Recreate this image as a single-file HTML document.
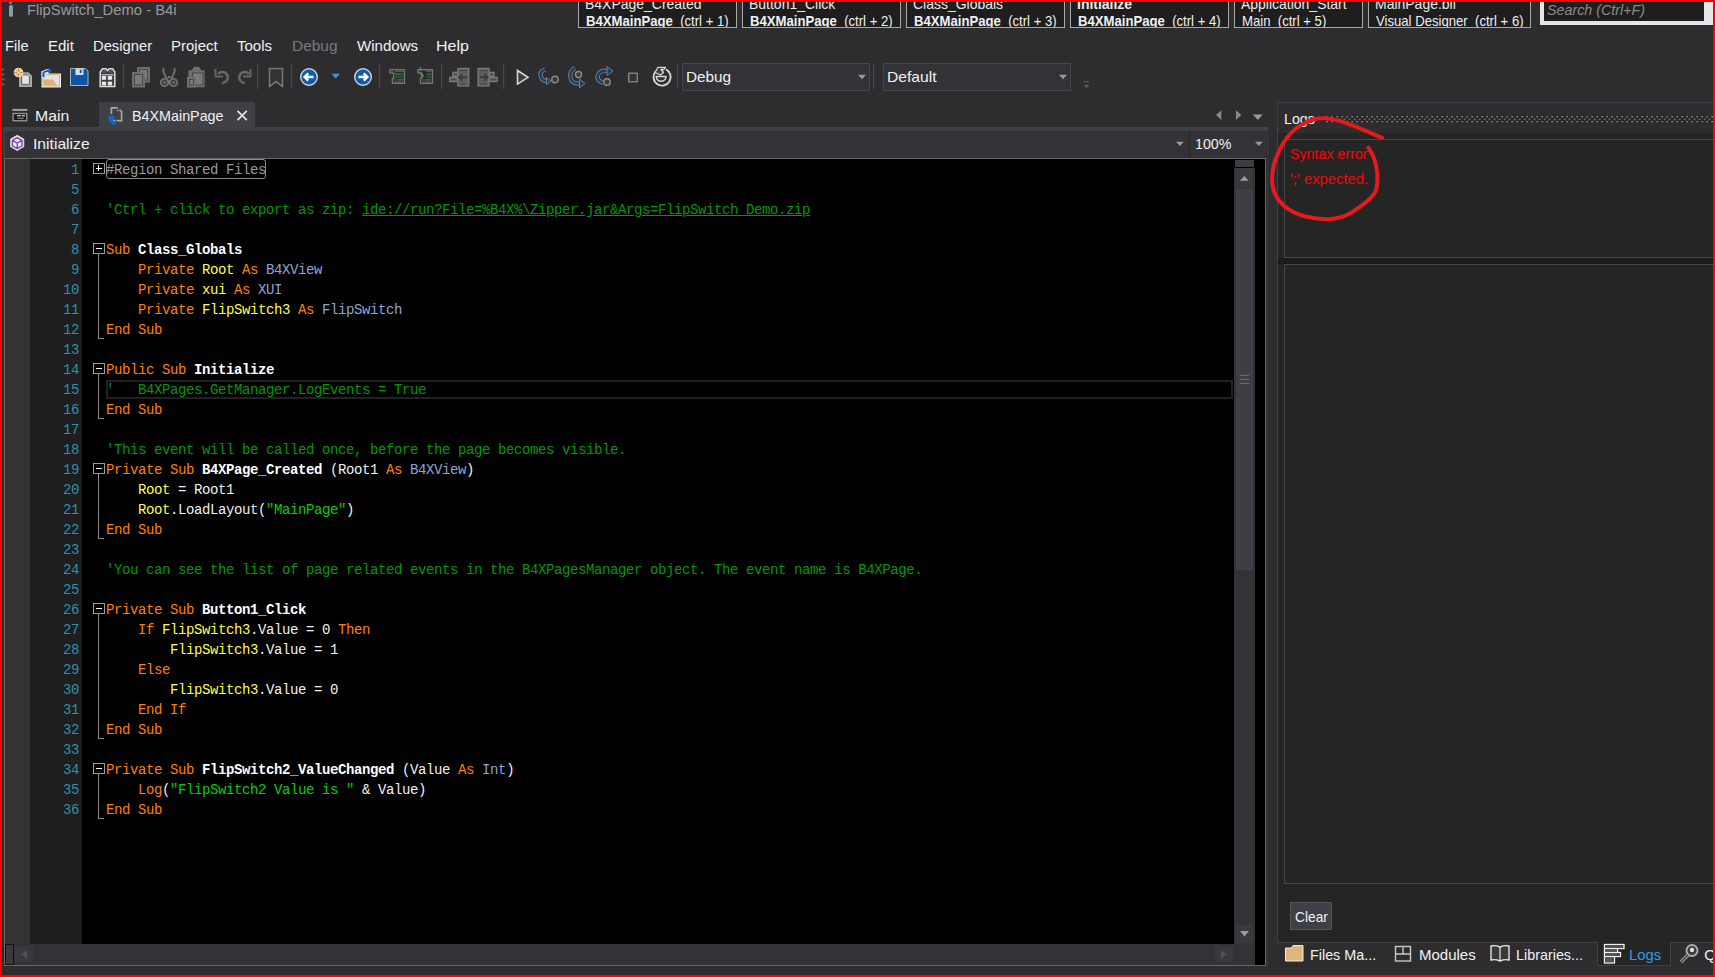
<!DOCTYPE html>
<html><head><meta charset="utf-8">
<style>
*{margin:0;padding:0;box-sizing:border-box}
html,body{width:1715px;height:977px;overflow:hidden;background:#2d2d30}
body{position:relative;font-family:"Liberation Sans",sans-serif;color:#f1f1f1}
.a{position:absolute}
.t{position:absolute;white-space:pre;line-height:1}
#frame{position:absolute;left:0;top:0;width:1715px;height:977px;border:2px solid #ff0000;z-index:50;pointer-events:none}
.nav{position:absolute;top:-2px;height:30px;background:#1e1e1e;border:1px solid #a8a8a8;border-top:none;overflow:hidden}
.nav .l1{position:absolute;left:7px;top:-5px;font-size:15px;color:#e8e8e8;white-space:pre;line-height:1}
.nav .l2{position:absolute;left:7px;top:14px;font-size:14px;color:#f1f1f1;white-space:pre;line-height:1}
.nav b{font-weight:bold}
.menu{position:absolute;top:38px;font-size:15px;color:#f1f1f1;line-height:1}
.sep{position:absolute;width:1px;background:#46464a}
.code{position:absolute;left:82px;top:159px;width:1152px;height:785px;background:#000;overflow:hidden}
.ln{position:absolute;left:30px;width:52px;text-align:right;padding-right:3px;font-family:"Liberation Mono",monospace;font-size:14px;letter-spacing:-0.4px;color:#2b91af;line-height:20px;height:20px;white-space:pre}
.row{position:absolute;left:24px;font-family:"Liberation Mono",monospace;font-size:14px;letter-spacing:-0.4px;line-height:20px;height:20px;white-space:pre;color:#e6e6e6}
.k{color:#ff8000}.c{color:#009900}.y{color:#ffff40}.ty{color:#8ca5d6}.s{color:#00d000}.w{color:#f0f0f0}.b{font-weight:bold;color:#ffffff}
.fb{position:absolute;left:11px;width:12px;height:11px;border:1px solid #9a9a9a;background:#000}
.fb::after{content:"";position:absolute;left:2px;top:4px;width:6px;height:1px;background:#fff}
.fv{position:absolute;left:16px;width:1px;background:#8a8a8a}
.fh{position:absolute;left:16px;width:6px;height:1px;background:#8a8a8a}
</style></head><body>
<div id="frame"></div>

<!-- title -->
<div class="a" style="left:9px;top:2px;width:3px;height:2px;background:#6f8a90;border-radius:1px"></div><div class="a" style="left:9px;top:5px;width:3.5px;height:11.5px;background:#8c9ba0;border-radius:2px"></div>

<!-- nav buttons -->
<div class="nav" style="left:578px;width:159px"></div>
<div class="nav" style="left:742px;width:159px"></div>
<div class="nav" style="left:906px;width:159px"></div>
<div class="nav" style="left:1070px;width:159px"></div>
<div class="nav" style="left:1234px;width:129px"></div>
<div class="nav" style="left:1368px;width:163px"></div>
<!-- search -->
<div class="a" style="left:1540px;top:0;width:175px;height:25px;background:#e6e6ea"></div>
<div class="a" style="left:1544px;top:0;width:160px;height:21px;background:#1e1e1e"></div>

<!-- menu -->

<!-- TOOLBAR -->
<svg class="a" style="left:0;top:60px" width="1100" height="35" viewBox="0 0 1100 35">
<g fill="#5c5c5c"><rect x="2" y="8.3" width="2.5" height="2"/><rect x="2" y="13.3" width="2.5" height="2"/><rect x="2" y="18.3" width="2.5" height="2"/><rect x="2" y="23.3" width="2.5" height="2"/></g>
<!-- new -->
<path d="M20,13.2 h8 l3,3 v9.8 h-11 z" fill="#e4e4e4" stroke="#a6a6a6" stroke-width="2"/>
<path d="M21.6,14.8 h5.8 l2,2 v7.6 h-7.8 z" fill="#e4e4e4" stroke="#3a3a3a" stroke-width="0.8"/>
<circle cx="18.5" cy="12.5" r="4.8" fill="#efefef" opacity="0.9"/>
<g stroke="#d4862c" stroke-width="1.3"><line x1="14.2" y1="12.5" x2="22.9" y2="12.5"/><line x1="18.5" y1="8.2" x2="18.5" y2="16.8"/></g>
<g stroke="#e2aa66" stroke-width="1"><line x1="15.6" y1="9.6" x2="21.4" y2="15.4"/><line x1="21.4" y1="9.6" x2="15.6" y2="15.4"/></g>
<circle cx="18.5" cy="12.5" r="1.1" fill="#fff"/>
<!-- open -->
<path d="M41.5,11 h6 l2,2.5 h11.5 v14 h-19.5 z" fill="#f2f2f2"/>
<path d="M43,14.5 h16.5 v11.5 h-16.5 z" fill="#e2e2e2" stroke="#dcb678" stroke-width="1"/>
<path d="M43.4,19.4 h9.5 l4.3,6.3 h-13.8 z" fill="#dcb477"/>
<path d="M44,17 q-2.5,-5 3,-6 l2.5,0" fill="none" stroke="#f2f2f2" stroke-width="3.6"/>
<path d="M44,17 q-2.5,-5 3,-6 l2.5,0" fill="none" stroke="#1463b8" stroke-width="2.2"/>
<path d="M48.5,8 l3.5,3 l-3.5,3 z" fill="#1463b8"/>
<!-- save -->
<path d="M70.5,8.5 h15 l2.5,2.5 v14.5 h-17.5 z" fill="#0b58a8" stroke="#aeb4bc" stroke-width="1"/>
<rect x="75.5" y="8.5" width="8" height="6.5" fill="#dcdcdc"/>
<rect x="79.8" y="9.8" width="1.8" height="3.2" fill="#0b58a8"/>
<!-- save all -->
<path d="M100.2,12 l2.2,-3.2 h3.5 l1.6,1.8 l1.6,-1.8 h3.5 l2.2,3.2 v14.6 h-14.6 z" fill="#3a3a3a" stroke="#dcdcdc" stroke-width="1.5"/>
<ellipse cx="104.5" cy="11.5" rx="2.2" ry="1.6" fill="#5a5a5a"/><ellipse cx="110.7" cy="11.5" rx="2.2" ry="1.6" fill="#5a5a5a"/>
<rect x="101.5" y="14.2" width="12" height="1.2" fill="#d0d0d0"/>
<g fill="#e8e8e8"><rect x="101.8" y="16" width="4.3" height="3.8"/><rect x="107.8" y="16" width="4.3" height="3.8"/><rect x="101.8" y="21.6" width="4.3" height="3.8"/><rect x="107.8" y="21.6" width="4.3" height="3.8"/></g>
<g fill="#47474c"><rect x="123" y="4" width="1.2" height="25"/><rect x="257" y="4" width="1.2" height="25"/><rect x="291" y="4" width="1.2" height="25"/><rect x="379" y="4" width="1.2" height="25"/><rect x="441" y="4" width="1.2" height="25"/><rect x="503" y="4" width="1.2" height="25"/><rect x="677" y="4" width="1.2" height="25"/><rect x="873" y="4" width="1.2" height="25"/></g>
<!-- copy -->
<rect x="137.5" y="7.5" width="12" height="14.5" fill="#6e6e6e" stroke="#6e6e6e" stroke-width="1"/>
<rect x="139.5" y="9.5" width="8" height="10.5" fill="#7a7a7a" stroke="#3f3f3f" stroke-width="0.8"/>
<rect x="132.5" y="12.5" width="12" height="14.5" fill="#6e6e6e" stroke="#6e6e6e" stroke-width="1"/>
<rect x="134.5" y="14.5" width="8" height="10.5" fill="#7a7a7a" stroke="#3f3f3f" stroke-width="0.8"/>
<!-- cut -->
<g fill="none" stroke="#6a6a6a" stroke-width="2.2"><path d="M163.5,8 q-1,5 4,11"/><path d="M174.5,8 q1,5 -4,11"/><circle cx="164.5" cy="22.5" r="3.6"/><circle cx="173.5" cy="22.5" r="3.6"/></g>
<g fill="#7a7a7a"><circle cx="164.5" cy="22.5" r="1.3"/><circle cx="173.5" cy="22.5" r="1.3"/><rect x="168" y="16" width="2" height="2"/><rect x="168" y="20.5" width="2" height="3"/></g>
<!-- paste -->
<path d="M189,11 h3 l2.5,-3.5 h4 l2.5,3.5 h3 v15.5 h-15 z" fill="#6e6e6e" stroke="#707070" stroke-width="1.3"/>
<rect x="192.5" y="13" width="10.5" height="12" fill="#7a7a7a" stroke="#3f3f3f" stroke-width="0.8"/>
<rect x="187.5" y="17.5" width="8" height="9.5" fill="#6e6e6e" stroke="#707070" stroke-width="1"/>
<rect x="189.5" y="19.5" width="4" height="5.5" fill="#7a7a7a" stroke="#3f3f3f" stroke-width="0.8"/>
<!-- undo -->
<path d="M218,14 a5.5,5.5 0 1 1 4,9" fill="none" stroke="#666" stroke-width="2.6"/>
<path d="M215.5,9 v7.5 h7.5" fill="none" stroke="#666" stroke-width="2"/>
<!-- redo -->
<path d="M249,14 a5.5,5.5 0 1 0 -4,9" fill="none" stroke="#666" stroke-width="2.6"/>
<path d="M250.5,9 v7.5 h-7.5" fill="none" stroke="#666" stroke-width="2"/>
<!-- bookmark -->
<path d="M269.5,8.5 h13 v18 l-6.5,-5 l-6.5,5 z" fill="#333336" stroke="#767676" stroke-width="1.6"/>
<!-- back -->
<circle cx="309" cy="17" r="8.3" fill="#0b5cae" stroke="#cfd3d8" stroke-width="1.4"/>
<path d="M313.5,17 h-8.5 M308.3,13.3 l-3.7,3.7 l3.7,3.7" fill="none" stroke="#fff" stroke-width="2.4"/>
<path d="M331.6,13.7 h8.4 l-4.2,4.7 z" fill="#4b8fd8"/>
<!-- forward -->
<circle cx="363" cy="17" r="8.3" fill="#0b5cae" stroke="#cfd3d8" stroke-width="1.4"/>
<path d="M358.5,17 h8.5 M363.7,13.3 l3.7,3.7 l-3.7,3.7" fill="none" stroke="#fff" stroke-width="2.4"/>
<!-- comment -->
<path d="M389.8,9.6 H404.5 V23.4 H392.4 V18.4 H393.6 V12.8 H389.8 Z" fill="#2c2c2e" stroke="#757575" stroke-width="1.3"/>
<g fill="#6a6a6a"><rect x="391" y="10.7" width="1.8" height="1"/><rect x="395" y="10.7" width="8.4" height="1"/><rect x="394" y="19.4" width="1.6" height="1"/><rect x="397" y="19.4" width="6.4" height="1"/><rect x="394" y="21.6" width="9.4" height="1"/></g>
<rect x="394.8" y="13.6" width="8.6" height="1.2" fill="#3f7f3f"/><rect x="394.8" y="16.3" width="8.6" height="1.2" fill="#2f7530"/>
<!-- uncomment -->
<path d="M417.8,9.6 H432.5 V23.4 H420.4 V18.4 H421.6 V12.8 H417.8 Z" fill="#2c2c2e" stroke="#757575" stroke-width="1.3"/>
<g fill="#6a6a6a"><rect x="426" y="10.7" width="5.4" height="1"/><rect x="422" y="19.4" width="1.6" height="1"/><rect x="425" y="19.4" width="6.4" height="1"/><rect x="422" y="21.6" width="9.4" height="1"/></g>
<rect x="427" y="13.6" width="4.4" height="1.2" fill="#3f7f3f"/><rect x="427" y="16.3" width="4.4" height="1.2" fill="#2f7530"/>
<path d="M420.5,7 v4 M419,11.5 q0,2.5 2,2.5 q2.5,0 1.8,2.5 l-2.6,2.5" fill="none" stroke="#6e6e6e" stroke-width="1.6"/>
<!-- outdent -->
<g fill="#5f5f5f" stroke="#7a7a7a" stroke-width="1.2"><rect x="452.8" y="12.3" width="5" height="4.2"/><rect x="449.6" y="17.3" width="8.2" height="4.3"/><rect x="457.8" y="8.4" width="11" height="17.6"/></g>
<g fill="#4a4a4a"><rect x="459.5" y="10" width="7.5" height="1.2"/><rect x="459.5" y="23.6" width="7.5" height="1.2"/><rect x="451" y="19" width="5" height="1"/><rect x="454" y="14" width="2.5" height="1"/></g>
<path d="M467,17.3 h-7.5 M462.5,14 l-3.3,3.3 l3.3,3.3" fill="none" stroke="#3c3c3c" stroke-width="1.9"/>
<!-- indent -->
<g fill="#5f5f5f" stroke="#7a7a7a" stroke-width="1.2"><rect x="489" y="12.3" width="5" height="4.2"/><rect x="489" y="17.3" width="8.2" height="4.3"/><rect x="478" y="8.4" width="11" height="17.6"/></g>
<g fill="#4a4a4a"><rect x="479.8" y="10" width="7.5" height="1.2"/><rect x="479.8" y="23.6" width="7.5" height="1.2"/><rect x="490.5" y="19" width="5" height="1"/><rect x="490.5" y="14" width="2.5" height="1"/></g>
<path d="M479.8,17.3 h7.5 M484.3,14 l3.3,3.3 l-3.3,3.3" fill="none" stroke="#3c3c3c" stroke-width="1.9"/>
<!-- play -->
<path d="M517.5,10.5 l10.5,6.8 l-10.5,6.8 z" fill="#3e3e40" stroke="#d6d6d6" stroke-width="1.6"/>
<!-- step over -->
<path d="M545,9.5 q-6,2 -4,8 q2,4 7,3.5" fill="none" stroke="#7c7c7c" stroke-width="4.4"/>
<path d="M545,9.5 q-6,2 -4,8 q2,4 7,3.5" fill="none" stroke="#17406b" stroke-width="2.6"/>
<path d="M546.5,17.5 l4.5,3.5 l-4.5,3.5 z" fill="#17406b" stroke="#8a8a8a" stroke-width="0.8"/>
<circle cx="555" cy="19.5" r="3.2" fill="#3a3a3a" stroke="#8c8c8c" stroke-width="1.4"/>
<!-- step into -->
<path d="M575,8 q-6,3 -4.5,10 q1.5,6 9.5,5.5" fill="none" stroke="#7c7c7c" stroke-width="4.4"/>
<path d="M575,8 q-6,3 -4.5,10 q1.5,6 9.5,5.5" fill="none" stroke="#17406b" stroke-width="2.6"/>
<path d="M579.5,19 l5.5,4.5 l-5.5,4.5 z" fill="#17406b" stroke="#8a8a8a" stroke-width="0.8"/>
<circle cx="578.5" cy="14.5" r="3" fill="#3a3a3a" stroke="#8c8c8c" stroke-width="1.4"/>
<!-- step out -->
<path d="M603,23 q-7,-3 -5,-8 q2,-5 9,-4" fill="none" stroke="#7c7c7c" stroke-width="4.4"/>
<path d="M603,23 q-7,-3 -5,-8 q2,-5 9,-4" fill="none" stroke="#17406b" stroke-width="2.6"/>
<path d="M607,6.5 l6,4.5 l-6,4.5 z" fill="#17406b" stroke="#8a8a8a" stroke-width="0.8"/>
<circle cx="607" cy="22" r="3.2" fill="#3a3a3a" stroke="#8c8c8c" stroke-width="1.4"/>
<!-- stop -->
<rect x="628.7" y="13.2" width="8.6" height="8.6" fill="#333336" stroke="#8a8a8a" stroke-width="1.3"/>
<!-- restart -->
<path d="M655.5,11.5 A8.6,8.6 0 1 0 666,9.4" fill="none" stroke="#d6d6d6" stroke-width="1.9"/>
<path d="M658,7.3 h7.5 l-1.5,2.2 h-3 l2.5,3 l-3,2.5 l-5.5,-2.5 z" fill="#3c3c3c" stroke="#d6d6d6" stroke-width="1.3" stroke-linejoin="round"/>
<path d="M656.3,16.5 a4.8,4.8 0 0 0 9.6,0 z" fill="#2e2e2e" stroke="#d6d6d6" stroke-width="1.6"/>
<!-- overflow -->
<rect x="1083.8" y="21" width="5.1" height="1.3" fill="#5c5c5c"/><path d="M1083.6,24.8 h5.6 l-2.8,3.4 z" fill="#5c5c5c"/>
</svg>



<!-- combos -->
<div class="a" style="left:682px;top:63px;width:188px;height:28px;border:1px solid #46464a;background:#333337"></div>
<div class="a" style="left:883px;top:63px;width:188px;height:28px;border:1px solid #46464a;background:#333337"></div>
<svg class="a" style="left:0;top:0" width="1100" height="100"><path d="M858,74.7 h8 l-4,4.6 z" fill="#9a9a9a"/><path d="M1059,74.8 h8 l-4,4.4 z" fill="#9a9a9a"/></svg>

<!-- tabs -->
<div class="a" style="left:99px;top:102px;width:156px;height:25px;background:#3f3f46"></div>
<div class="a" style="left:3px;top:127px;width:1265px;height:4px;background:#3f3f46"></div>
<div class="a" style="left:3px;top:131px;width:2px;height:27px;background:#3c3c42"></div>

<!-- dropdown row -->
<div class="a" style="left:5px;top:131px;width:1183px;height:27px;background:#333337"></div>
<div class="a" style="left:1191px;top:131px;width:75px;height:27px;background:#333337"></div>

<!-- editor -->
<div class="a" style="left:4px;top:158px;width:1262px;height:808px;border:1px solid #686868;background:#000"></div>
<div class="a" style="left:1267px;top:131px;width:1px;height:836px;background:#3a3a40"></div>
<div class="a" style="left:5px;top:159px;width:25px;height:785px;background:#333333"></div>
<div class="a" style="left:30px;top:159px;width:52px;height:785px;background:#1e1e1e"></div>
<div class="code" id="code">
<div class="row" style="top:1px"><span style="color:#9b9b9b">#Region Shared Files</span></div>
<div class="fb" style="top:4px"></div>
<div class="a" style="left:16px;top:6px;width:1px;height:6px;background:#fff"></div>
<div class="row" style="top:41px"><span class="c">'Ctrl + click to export as zip: </span><span class="c" style="text-decoration:underline">ide://run?File=%B4X%\Zipper.jar&amp;Args=FlipSwitch_Demo.zip</span></div>
<div class="row" style="top:81px"><span class="k">Sub </span><span class="b">Class_Globals</span></div>
<div class="fb" style="top:84px"></div>
<div class="row" style="top:101px"><span class="k">    Private </span><span class="y">Root</span><span class="k"> As </span><span class="ty">B4XView</span></div>
<div class="row" style="top:121px"><span class="k">    Private </span><span class="y">xui</span><span class="k"> As </span><span class="ty">XUI</span></div>
<div class="row" style="top:141px"><span class="k">    Private </span><span class="y">FlipSwitch3</span><span class="k"> As </span><span class="ty">FlipSwitch</span></div>
<div class="row" style="top:161px"><span class="k">End Sub</span></div>
<div class="fv" style="top:95px;height:84px"></div>
<div class="fh" style="top:179px"></div>
<div class="row" style="top:201px"><span class="k">Public Sub </span><span class="b">Initialize</span></div>
<div class="fb" style="top:204px"></div>
<div class="a" style="left:24px;top:221px;width:1127px;height:19px;border:2px solid #212121"></div>
<div class="row" style="top:221px"><span class="c">'   B4XPages.GetManager.LogEvents = True</span></div>
<div class="row" style="top:241px"><span class="k">End Sub</span></div>
<div class="fv" style="top:215px;height:44px"></div>
<div class="fh" style="top:259px"></div>
<div class="row" style="top:281px"><span class="c">'This event will be called once, before the page becomes visible.</span></div>
<div class="row" style="top:301px"><span class="k">Private Sub </span><span class="b">B4XPage_Created</span><span class="w"> (Root1 </span><span class="k">As </span><span class="ty">B4XView</span><span class="w">)</span></div>
<div class="fb" style="top:304px"></div>
<div class="row" style="top:321px"><span class="y">    Root</span><span class="w"> = Root1</span></div>
<div class="row" style="top:341px"><span class="y">    Root</span><span class="w">.LoadLayout(</span><span class="s">"MainPage"</span><span class="w">)</span></div>
<div class="row" style="top:361px"><span class="k">End Sub</span></div>
<div class="fv" style="top:315px;height:64px"></div>
<div class="fh" style="top:379px"></div>
<div class="row" style="top:401px"><span class="c">'You can see the list of page related events in the B4XPagesManager object. The event name is B4XPage.</span></div>
<div class="row" style="top:441px"><span class="k">Private Sub </span><span class="b">Button1_Click</span></div>
<div class="fb" style="top:444px"></div>
<div class="row" style="top:461px"><span class="k">    If </span><span class="y">FlipSwitch3</span><span class="w">.Value = 0 </span><span class="k">Then</span></div>
<div class="row" style="top:481px"><span class="y">        FlipSwitch3</span><span class="w">.Value = 1</span></div>
<div class="row" style="top:501px"><span class="k">    Else</span></div>
<div class="row" style="top:521px"><span class="y">        FlipSwitch3</span><span class="w">.Value = 0</span></div>
<div class="row" style="top:541px"><span class="k">    End If</span></div>
<div class="row" style="top:561px"><span class="k">End Sub</span></div>
<div class="fv" style="top:455px;height:124px"></div>
<div class="fh" style="top:579px"></div>
<div class="row" style="top:601px"><span class="k">Private Sub </span><span class="b">FlipSwitch2_ValueChanged</span><span class="w"> (Value </span><span class="k">As </span><span class="ty">Int</span><span class="w">)</span></div>
<div class="fb" style="top:604px"></div>
<div class="row" style="top:621px"><span class="k">    Log</span><span class="w">(</span><span class="s">"FlipSwitch2 Value is "</span><span class="w"> &amp; Value)</span></div>
<div class="row" style="top:641px"><span class="k">End Sub</span></div>
<div class="fv" style="top:615px;height:44px"></div>
<div class="fh" style="top:659px"></div>
<div class="a" style="left:24px;top:0px;width:160px;height:20px;border:1px solid #8c8c8c;border-radius:3px"></div>
</div>
<div class="ln" style="top:160px">1</div>
<div class="ln" style="top:180px">5</div>
<div class="ln" style="top:200px">6</div>
<div class="ln" style="top:220px">7</div>
<div class="ln" style="top:240px">8</div>
<div class="ln" style="top:260px">9</div>
<div class="ln" style="top:280px">10</div>
<div class="ln" style="top:300px">11</div>
<div class="ln" style="top:320px">12</div>
<div class="ln" style="top:340px">13</div>
<div class="ln" style="top:360px">14</div>
<div class="ln" style="top:380px">15</div>
<div class="ln" style="top:400px">16</div>
<div class="ln" style="top:420px">17</div>
<div class="ln" style="top:440px">18</div>
<div class="ln" style="top:460px">19</div>
<div class="ln" style="top:480px">20</div>
<div class="ln" style="top:500px">21</div>
<div class="ln" style="top:520px">22</div>
<div class="ln" style="top:540px">23</div>
<div class="ln" style="top:560px">24</div>
<div class="ln" style="top:580px">25</div>
<div class="ln" style="top:600px">26</div>
<div class="ln" style="top:620px">27</div>
<div class="ln" style="top:640px">28</div>
<div class="ln" style="top:660px">29</div>
<div class="ln" style="top:680px">30</div>
<div class="ln" style="top:700px">31</div>
<div class="ln" style="top:720px">32</div>
<div class="ln" style="top:740px">33</div>
<div class="ln" style="top:760px">34</div>
<div class="ln" style="top:780px">35</div>
<div class="ln" style="top:800px">36</div>

<!-- vertical scrollbar -->
<div class="a" style="left:1234px;top:168px;width:21px;height:797px;background:#333337"></div>
<div class="a" style="left:1234px;top:159px;width:21px;height:9px;background:#000"></div>
<div class="a" style="left:1235px;top:160px;width:19px;height:7px;background:#3e3e42"></div>
<div class="a" style="left:1236px;top:168px;width:17px;height:20px;background:#3a3a3e"></div>
<div class="a" style="left:1236px;top:189px;width:17px;height:381px;background:#3f3e44"></div>
<div class="a" style="left:1236px;top:925px;width:17px;height:18px;background:#3a3a3e"></div>
<div class="a" style="left:1255px;top:159px;width:10px;height:806px;background:#000"></div>
<svg class="a" style="left:1200px;top:150px" width="70" height="820" viewBox="1200 150 70 820">
<path d="M1240,180.8 h8.6 l-4.3,-4.9 z" fill="#9c9c9c"/>
<path d="M1240,931 h9 l-4.5,5.5 z" fill="#9c9c9c"/>
<g fill="#6a6a6e"><rect x="1240" y="375" width="9" height="1"/><rect x="1240" y="379" width="9" height="1"/><rect x="1240" y="383" width="9" height="1"/></g>
</svg>
<!-- horizontal scrollbar -->
<div class="a" style="left:5px;top:944px;width:1229px;height:21px;background:#333337"></div>
<div class="a" style="left:5px;top:944px;width:9px;height:21px;background:#3a3a3e;border:1px solid #111"></div>
<div class="a" style="left:15px;top:946px;width:18px;height:16px;background:#3a3a3e"></div>
<div class="a" style="left:1215px;top:946px;width:18px;height:16px;background:#3a3a3e"></div>
<svg class="a" style="left:0;top:940px" width="1240" height="30" viewBox="0 940 1240 30">
<path d="M27,950 v9 l-5,-4.5 z" fill="#535357"/>
<path d="M1221,950 v9 l5,-4.5 z" fill="#535357"/>
</svg>



<svg class="a" style="left:0;top:95px" width="1280" height="70" viewBox="0 95 1280 70">
<!-- main tab icon -->
<rect x="12.4" y="108.9" width="15" height="2" fill="#a2a2a2"/>
<rect x="13.1" y="113.5" width="13.6" height="7.2" fill="#1c1c1c" stroke="#8e8e8e" stroke-width="1.4"/>
<rect x="17" y="115.2" width="4.2" height="1.1" fill="#d8d8d8"/><rect x="22" y="115.2" width="3" height="1.1" fill="#d8d8d8"/><rect x="17.3" y="117.7" width="6.5" height="1.1" fill="#909090"/>
<!-- B4XMainPage icon -->
<path d="M111.4,114 v-6.2 h6.4 M119.5,109.5 l2.1,2.1 v9 h-5" fill="none" stroke="#a8a8a8" stroke-width="1.7"/>
<rect x="116.8" y="109.9" width="1.6" height="1.6" fill="#9a9a9a"/>
<path d="M111.6,119 v1.6 h4" fill="none" stroke="#a8a8a8" stroke-width="1.5"/>
<path d="M107.5,117.5 l3,-3 l1.5,1.5 l2.5,-0.5 l0.5,2 l-2.5,2 l1,1.5 l2.5,0.5 l0,2.5 l-2.5,1.5 l-2,-1.5 l-1,-2 l-1.5,-2 z" fill="#1565c0"/>
<!-- close x -->
<path d="M237.5,110.8 l9.3,9.3 M246.8,110.8 l-9.3,9.3" stroke="#dedede" stroke-width="1.9"/>
<!-- initialize icon -->
<path d="M17.2,135.3 l6.6,3.8 v7.6 l-6.6,3.8 l-6.6,-3.8 v-7.6 z" fill="#ececec" stroke="#e0e0e0" stroke-width="0.8"/>
<path d="M17.2,137.6 l4.8,2.8 v5.4 l-4.8,2.8 l-4.8,-2.8 v-5.4 z M12.6,140.6 l4.6,2.5 l4.6,-2.5 M17.2,143.1 v5.3" fill="none" stroke="#7b3fb3" stroke-width="1.3"/>
<!-- tab nav arrows -->
<path d="M1221.3,110.2 v9.7 l-5.3,-4.85 z" fill="#8a8a8a"/>
<path d="M1236,110.2 v9.7 l5.3,-4.85 z" fill="#8a8a8a"/>
<path d="M1252.8,114.6 h10 l-5,5.3 z" fill="#9a9a9a"/>
<!-- dropdown arrows -->
<path d="M1176,141.7 h7.7 l-3.85,4.3 z" fill="#9a9a9a"/>
<path d="M1255,141.7 h7.8 l-3.9,4.3 z" fill="#9a9a9a"/>
</svg>

<!-- logs panel -->
<div class="a" style="left:1277px;top:102px;width:440px;height:841px;border:1px solid #3f3f46;background:#252526"></div>
<div class="a" style="left:1278px;top:103px;width:440px;height:30px;background:#2d2d30"></div>
<div class="a" style="left:1284px;top:139px;width:440px;height:119px;border:1px solid #464646;background:#252526"></div>
<div class="a" style="left:1278px;top:258px;width:440px;height:6px;background:#1b1b1c"></div>
<div class="a" style="left:1284px;top:264px;width:440px;height:620px;border:1px solid #464646;background:#252526"></div>
<div class="a" style="left:1290px;top:902px;width:42px;height:28px;background:#3f3f46;border:1px solid #555558"></div>


<!-- grip -->
<svg class="a" style="left:1326px;top:114px" width="390" height="10"><defs><pattern id="grip" x="0" y="0" width="5" height="10" patternUnits="userSpaceOnUse"><rect x="0" y="1" width="5" height="8" fill="#29292b"/><rect x="0.5" y="2" width="1.3" height="1.3" fill="#a0a0a0"/><rect x="0.5" y="7" width="1.3" height="1.3" fill="#a0a0a0"/><rect x="2.8" y="4.5" width="1.6" height="1.6" fill="#6a6a6a"/></pattern></defs><rect width="390" height="10" fill="url(#grip)"/></svg>
<!-- bottom tabs -->
<div class="a" style="left:1597px;top:942px;width:74px;height:24px;background:#252526;border:1px solid #3f3f46;border-top:none"></div>
<div class="a" style="left:1277px;top:942px;width:320px;height:1px;background:#3f3f46"></div>
<div class="a" style="left:1670px;top:942px;width:45px;height:1px;background:#3f3f46"></div>
<svg class="a" style="left:1280px;top:940px" width="435" height="30" viewBox="1280 940 435 30">
<path d="M1285.5,948 h6 l1.5,-2.5 h10 v15.5 h-17.5 z" fill="#dcb67a" stroke="#f0f0f0" stroke-width="1"/>
<rect x="1395.5" y="946.5" width="15" height="14.5" fill="none" stroke="#c8c8c8" stroke-width="1.4"/>
<path d="M1395.5,954 h15 M1403,946.5 v7.5" stroke="#c8c8c8" stroke-width="1.4"/>
<path d="M1491,946 q4.5,-1 9,1 q4.5,-2 9,-1 v14 q-4.5,-1 -9,1 q-4.5,-2 -9,-1 z" fill="#3a3a3a" stroke="#e6e6e6" stroke-width="1.4"/>
<path d="M1500,947 v14" stroke="#e6e6e6" stroke-width="1.2"/>
<g fill="none" stroke="#f2f2f2" stroke-width="1.3"><rect x="1604.5" y="944.5" width="19.5" height="4"/><rect x="1604.5" y="948.5" width="13" height="4"/><rect x="1604.5" y="952.5" width="16" height="4"/><rect x="1604.5" y="956.5" width="10" height="6.5"/></g>
<g fill="#555"><rect x="1605.5" y="945.5" width="17.5" height="2"/><rect x="1605.5" y="949.5" width="11" height="2"/><rect x="1605.5" y="953.5" width="14" height="2"/><rect x="1605.5" y="957.5" width="8" height="4.5"/></g>
<circle cx="1692" cy="950.5" r="5.5" fill="#3a3a3a" stroke="#aaaaaa" stroke-width="2"/>
<circle cx="1692" cy="950" r="2.2" fill="#e0e0e0"/>
<path d="M1688,955 l-7,7" stroke="#aaaaaa" stroke-width="3.4"/>
<path d="M1688,955 l-7,7" stroke="#3a3a3a" stroke-width="1.4"/>
</svg>
<!-- annotation -->
<svg class="a" style="left:1250px;top:100px;z-index:20" width="160" height="140" viewBox="1250 100 160 140">
<path d="M1368.2,147.6 C1369.2,149.3 1372.5,154.2 1373.9,157.9 C1375.4,161.5 1376.2,165.5 1376.8,169.3 C1377.4,173.2 1377.6,177.2 1377.4,180.8 C1377.2,184.4 1376.8,188.3 1375.7,191.1 C1374.5,194.0 1372.7,195.7 1370.5,198.0 C1368.3,200.3 1365.7,202.4 1362.5,204.9 C1359.2,207.4 1354.8,210.8 1351.0,212.9 C1347.2,215.0 1343.6,216.5 1339.5,217.5 C1335.5,218.6 1331.3,219.1 1326.9,219.2 C1322.5,219.3 1317.8,218.8 1313.2,218.1 C1308.6,217.3 1303.6,216.2 1299.4,214.6 C1295.2,213.1 1291.4,211.3 1287.9,208.9 C1284.5,206.5 1281.2,203.5 1278.8,200.3 C1276.4,197.1 1274.7,193.6 1273.6,190.0 C1272.5,186.4 1272.1,182.5 1272.1,178.5 C1272.1,174.5 1272.7,169.9 1273.6,165.9 C1274.5,161.9 1276.0,158.3 1277.6,154.4 C1279.2,150.6 1281.1,146.6 1283.3,143.0 C1285.6,139.3 1288.3,135.7 1291.4,132.6 C1294.4,129.6 1298.1,126.8 1301.7,124.6 C1305.3,122.4 1309.3,120.5 1313.2,119.5 C1317.0,118.4 1320.4,118.1 1324.6,118.3 C1328.8,118.5 1333.8,119.5 1338.4,120.6 C1343.0,121.7 1347.6,123.5 1352.2,125.2 C1356.7,126.9 1360.9,128.8 1365.9,130.9 C1370.9,133.0 1379.3,136.7 1382.0,137.8" fill="none" stroke="#e41a1c" stroke-width="4" stroke-linecap="round" stroke-linejoin="round"/>
</svg>

<div class="t" id="title" style="left:27.10px;top:2.00px;font-size:15px;color:#9a9a9a;transform:scaleX(0.9860);transform-origin:0 0;">FlipSwitch_Demo - B4i</div>
<div class="t" id="search" style="left:1546.60px;top:2.00px;font-size:15px;color:#8a8a8a;transform:scaleX(0.9511);transform-origin:0 0;font-style:italic">Search (Ctrl+F)</div>
<div class="t" id="m_file" style="left:5.45px;top:38.00px;font-size:15px;color:#f1f1f1;transform:scaleX(0.9816);transform-origin:0 0;">File</div>
<div class="t" id="m_edit" style="left:47.50px;top:38.00px;font-size:15px;color:#f1f1f1;transform:scaleX(1.0012);transform-origin:0 0;">Edit</div>
<div class="t" id="m_des" style="left:92.50px;top:38.00px;font-size:15px;color:#f1f1f1;transform:scaleX(0.9835);transform-origin:0 0;">Designer</div>
<div class="t" id="m_proj" style="left:171.00px;top:38.00px;font-size:15px;color:#f1f1f1;transform:scaleX(1.0000);transform-origin:0 0;">Project</div>
<div class="t" id="m_tools" style="left:237.10px;top:38.00px;font-size:15px;color:#f1f1f1;transform:scaleX(1.0008);transform-origin:0 0;">Tools</div>
<div class="t" id="m_debug" style="left:291.90px;top:38.00px;font-size:15px;color:#7a7a7a;transform:scaleX(1.0289);transform-origin:0 0;">Debug</div>
<div class="t" id="m_win" style="left:356.60px;top:38.00px;font-size:15px;color:#f1f1f1;transform:scaleX(1.0037);transform-origin:0 0;">Windows</div>
<div class="t" id="m_help" style="left:436.00px;top:38.00px;font-size:15px;color:#f1f1f1;transform:scaleX(1.0667);transform-origin:0 0;">Help</div>
<div class="t" id="c_debug" style="left:685.60px;top:69.00px;font-size:15px;color:#f1f1f1;transform:scaleX(1.0195);transform-origin:0 0;">Debug</div>
<div class="t" id="c_default" style="left:886.80px;top:69.00px;font-size:15px;color:#f1f1f1;transform:scaleX(1.0426);transform-origin:0 0;">Default</div>
<div class="t" id="tab_main" style="left:35.40px;top:108.00px;font-size:15px;color:#f1f1f1;transform:scaleX(1.0531);transform-origin:0 0;">Main</div>
<div class="t" id="tab_b4x" style="left:131.90px;top:108.00px;font-size:15px;color:#f1f1f1;transform:scaleX(0.9544);transform-origin:0 0;">B4XMainPage</div>
<div class="t" id="initialize" style="left:33.10px;top:136.00px;font-size:15px;color:#f1f1f1;transform:scaleX(1.0451);transform-origin:0 0;">Initialize</div>
<div class="t" id="zoom" style="left:1195.00px;top:136.00px;font-size:15px;color:#f1f1f1;transform:scaleX(0.9481);transform-origin:0 0;">100%</div>
<div class="t" id="logs_h" style="left:1283.60px;top:111.00px;font-size:15px;color:#f1f1f1;transform:scaleX(0.9459);transform-origin:0 0;">Logs</div>
<div class="t" id="err1" style="left:1289.80px;top:146.00px;font-size:15px;color:#ff0000;transform:scaleX(0.9494);transform-origin:0 0;">Syntax error</div>
<div class="t" id="err2" style="left:1290.00px;top:171.00px;font-size:15px;color:#ff0000;transform:scaleX(0.9879);transform-origin:0 0;">';' expected.</div>
<div class="t" id="clear" style="left:1294.50px;top:909.00px;font-size:15px;color:#f1f1f1;transform:scaleX(0.9173);transform-origin:0 0;">Clear</div>
<div class="t" id="bt_files" style="left:1309.80px;top:947.00px;font-size:15px;color:#f1f1f1;transform:scaleX(0.9561);transform-origin:0 0;">Files Ma...</div>
<div class="t" id="bt_mod" style="left:1418.90px;top:947.00px;font-size:15px;color:#f1f1f1;transform:scaleX(1.0003);transform-origin:0 0;">Modules</div>
<div class="t" id="bt_lib" style="left:1515.90px;top:947.00px;font-size:15px;color:#f1f1f1;transform:scaleX(0.9567);transform-origin:0 0;">Libraries...</div>
<div class="t" id="bt_logs" style="left:1629.20px;top:947.00px;font-size:15px;color:#2f9be9;transform:scaleX(0.9894);transform-origin:0 0;">Logs</div>
<div class="t" id="bt_q" style="left:1704.30px;top:947.00px;font-size:15px;color:#f1f1f1;transform:scaleX(1.0000);transform-origin:0 0;">Q</div>
<div class="a" style="left:579px;top:0px;width:157px;height:27px;overflow:hidden"><div class="t" id="nav1a" style="left:6.00px;top:-4.00px;font-size:15px;color:#e8e8e8;transform:scaleX(0.9316);transform-origin:0 0;">B4XPage_Created</div></div>
<div class="a" style="left:579px;top:0px;width:157px;height:27px;overflow:hidden"><div class="t" id="nav1b" style="left:7.00px;top:13.00px;font-size:15px;color:#f1f1f1;transform:scaleX(0.8755);transform-origin:0 0;"><b>B4XMainPage</b>  (ctrl + 1)</div></div>
<div class="a" style="left:743px;top:0px;width:157px;height:27px;overflow:hidden"><div class="t" id="nav2a" style="left:6.00px;top:-4.00px;font-size:15px;color:#e8e8e8;transform:scaleX(0.9316);transform-origin:0 0;">Button1_Click</div></div>
<div class="a" style="left:743px;top:0px;width:157px;height:27px;overflow:hidden"><div class="t" id="nav2b" style="left:7.00px;top:13.00px;font-size:15px;color:#f1f1f1;transform:scaleX(0.8755);transform-origin:0 0;"><b>B4XMainPage</b>  (ctrl + 2)</div></div>
<div class="a" style="left:907px;top:0px;width:157px;height:27px;overflow:hidden"><div class="t" id="nav3a" style="left:6.00px;top:-4.00px;font-size:15px;color:#e8e8e8;transform:scaleX(0.9316);transform-origin:0 0;">Class_Globals</div></div>
<div class="a" style="left:907px;top:0px;width:157px;height:27px;overflow:hidden"><div class="t" id="nav3b" style="left:7.00px;top:13.00px;font-size:15px;color:#f1f1f1;transform:scaleX(0.8755);transform-origin:0 0;"><b>B4XMainPage</b>  (ctrl + 3)</div></div>
<div class="a" style="left:1071px;top:0px;width:157px;height:27px;overflow:hidden"><div class="t" id="nav4a" style="left:6.00px;top:-4.00px;font-size:15px;color:#e8e8e8;transform:scaleX(0.9316);transform-origin:0 0;"><b>Initialize</b></div></div>
<div class="a" style="left:1071px;top:0px;width:157px;height:27px;overflow:hidden"><div class="t" id="nav4b" style="left:7.00px;top:13.00px;font-size:15px;color:#f1f1f1;transform:scaleX(0.8755);transform-origin:0 0;"><b>B4XMainPage</b>  (ctrl + 4)</div></div>
<div class="a" style="left:1235px;top:0px;width:127px;height:27px;overflow:hidden"><div class="t" id="nav5a" style="left:6.00px;top:-4.00px;font-size:15px;color:#e8e8e8;transform:scaleX(0.9316);transform-origin:0 0;">Application_Start</div></div>
<div class="a" style="left:1235px;top:0px;width:127px;height:27px;overflow:hidden"><div class="t" id="nav5b" style="left:7.00px;top:13.00px;font-size:15px;color:#f1f1f1;transform:scaleX(0.8755);transform-origin:0 0;">Main  (ctrl + 5)</div></div>
<div class="a" style="left:1369px;top:0px;width:161px;height:27px;overflow:hidden"><div class="t" id="nav6a" style="left:6.00px;top:-4.00px;font-size:15px;color:#e8e8e8;transform:scaleX(0.9316);transform-origin:0 0;">MainPage.bil</div></div>
<div class="a" style="left:1369px;top:0px;width:161px;height:27px;overflow:hidden"><div class="t" id="nav6b" style="left:7.00px;top:13.00px;font-size:15px;color:#f1f1f1;transform:scaleX(0.8755);transform-origin:0 0;">Visual Designer  (ctrl + 6)</div></div>
</body></html>
